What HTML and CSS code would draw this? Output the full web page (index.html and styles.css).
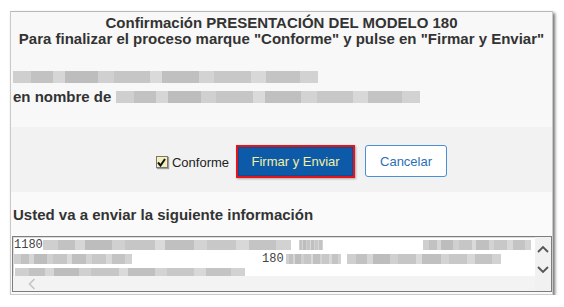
FILE: index.html
```html
<!DOCTYPE html>
<html lang="es">
<head>
<meta charset="utf-8">
<link rel="stylesheet" href="styles.css">
</head>
<body>
<div class="panel">
  <div class="title">Confirmación PRESENTACIÓN DEL MODELO 180<br>Para finalizar el proceso marque "Conforme" y pulse en "Firmar y Enviar"</div>
  <div class="who">
    <div class="blur b-who"></div>
    <div class="nombre">en nombre de <span class="blur b-nombre"></span></div>
  </div>
  <div class="actions">
    <label class="conforme"><span class="check"><svg width="9" height="9" viewBox="0 0 9 9"><path d="M1 4.5 L3.5 7.5 L8 1" fill="none" stroke="#111" stroke-width="2"/></svg></span>Conforme</label>
    <span class="firmar-wrap"><button class="firmar">Firmar y Enviar</button></span>
    <button class="cancelar">Cancelar</button>
  </div>
  <div class="info">
    <div class="info-title">Usted va a enviar la siguiente información</div>
    <div class="textarea">
      <div class="ta-body">
        <div class="ta-text">
          <div class="ta-row"><span class="mono">1180</span><span class="blur s1"></span><span class="blur s2"></span><span class="blur s3"></span></div>
          <div class="ta-row"><span class="blur s4"></span><span class="mono m2">180</span><span class="blur s5"></span><span class="blur s6"></span></div>
          <div class="ta-row"><span class="blur s7"></span></div>
        </div>
        <div class="hbar"><svg width="8" height="12" viewBox="0 0 8 12"><path d="M6.5 1 L1.5 6 L6.5 11" fill="none" stroke="#c4c4c4" stroke-width="1.6"/></svg></div>
      </div>
      <div class="vbar">
        <svg width="12" height="8" viewBox="0 0 12 8"><path d="M1 7 L6 2 L11 7" fill="none" stroke="#555" stroke-width="1.8"/></svg>
        <svg width="12" height="8" viewBox="0 0 12 8"><path d="M1 1 L6 6 L11 1" fill="none" stroke="#555" stroke-width="1.8"/></svg>
      </div>
    </div>
  </div>
</div>
</body>
</html>
```
FILE: styles.css
```css
* { box-sizing: border-box; }
body {
  margin: 0;
  background: #fff;
  font-family: "Liberation Sans", Arial, sans-serif;
  color: #333;
}
.panel {
  margin: 11px 0 0 10px;
  width: 543px;
  height: 284px;
  background: #f8f8f8;
  border: 1px solid #c9c9c9;
  border-top-color: #b8b8b8;
  box-shadow: 2px 2px 3px rgba(0,0,0,0.55);
  display: flex;
  flex-direction: column;
}
.title {
  flex: none;
  height: 35px;
  padding-top: 3px;
  text-align: center;
  font-weight: bold;
  font-size: 15px;
  line-height: 16px;
  color: #333;
}
.who {
  flex: none;
  padding: 24px 0 0 2px;
  height: 80px;
}
.blur {
  display: inline-block;
  background:
    linear-gradient(90deg,
      #cfcfcf 0 6%, #c2c2c2 6% 13%, #d6d6d6 13% 17%, #bdbdbd 17% 28%,
      #d0d0d0 28% 33%, #c6c6c6 33% 45%, #dadada 45% 49%, #c0c0c0 49% 61%,
      #d3d3d3 61% 66%, #c8c8c8 66% 78%, #d8d8d8 78% 83%, #c4c4c4 83% 94%, #d2d2d2 94% 100%);
}
.b-who {
  display: block;
  width: 305px;
  height: 12px;
}
.nombre {
  margin-top: 4px;
  font-weight: bold;
  font-size: 15px;
  line-height: 20px;
  color: #333;
  display: flex;
  align-items: center;
}
.b-nombre {
  margin-left: 5px;
  width: 304px;
  height: 12px;
}
.actions {
  flex: none;
  height: 65px;
  background: #f2f2f2;
  display: flex;
  align-items: flex-start;
  justify-content: center;
  padding: 18px 0 0 40px;
}
.conforme {
  display: flex;
  align-items: center;
  font-size: 13px;
  color: #222;
  height: 33px;
  padding-top: 1px;
}
.check {
  width: 12px;
  height: 12px;
  margin-right: 4px;
  background: #f4f0b8;
  border: 1px solid #777;
  box-shadow: 1px 1px 1px rgba(0,0,0,0.35);
  display: flex;
  align-items: center;
  justify-content: center;
}
.check svg { display: block; }
.firmar-wrap {
  margin-left: 7px;
  display: block;
  border: 2px solid #e5141b;
  box-shadow: 1px 1px 2px rgba(0,0,0,0.3);
}
.firmar {
  display: block;
  width: 115px;
  height: 29px;
  border: 1px solid #0b4d97;
  background: #0d5aa8;
  color: #f3f0a2;
  font-family: "Liberation Sans", Arial, sans-serif;
  font-size: 13px;
  padding: 0;
}
.cancelar {
  margin-left: 10px;
  width: 82px;
  height: 32px;
  background: #fff;
  border: 1px solid #4a8fd7;
  border-radius: 3px;
  color: #2c6fb8;
  font-family: "Liberation Sans", Arial, sans-serif;
  font-size: 13px;
  padding: 0;
}
.info {
  background: #fafafa;
  flex: 1;
  min-height: 0;
  padding: 13px 0 0 1px;
}
.info-title {
  font-weight: bold;
  font-size: 15px;
  line-height: 20px;
  color: #333;
  padding-left: 1px;
}
.textarea {
  margin-top: 11px;
  width: 540px;
  height: 56px;
  border: 1px solid #7d7d7d;
  box-shadow: inset 0 0 0 1px #dcdcdc;
  background: #fff;
  display: flex;
  overflow: hidden;
}
.ta-body {
  flex: 1;
  min-width: 0;
  display: flex;
  flex-direction: column;
}
.ta-text {
  flex: 1;
  min-height: 0;
  overflow: hidden;
  padding: 1px 0 0 1px;
}
.ta-row {
  height: 14px;
  display: flex;
  align-items: center;
  white-space: nowrap;
}
.mono {
  font-family: "Liberation Mono", "Courier New", monospace;
  font-size: 12px;
  color: #444;
}
.blur.s1 { width: 248px; height: 10px; }
.blur.s2 { width: 24px; height: 10px; margin-left: 8px; }
.blur.s3 { width: 108px; height: 10px; margin-left: 100px; }
.blur.s4 { width: 118px; height: 10px; }
.mono.m2 { margin-left: 130px; }
.blur.s5 { width: 55px; height: 10px; margin-left: 2px; }
.blur.s6 { width: 154px; height: 10px; margin-left: 6px; }
.blur.s7 { width: 230px; height: 10px; margin-left: 1px; }
.hbar {
  flex: none;
  height: 15px;
  background: #f3f3f3;
  display: flex;
  align-items: center;
  padding-left: 15px;
}
.vbar {
  flex: none;
  width: 16px;
  background: #f1f1f1;
  display: flex;
  flex-direction: column;
  align-items: center;
  padding-top: 8px;
  gap: 13px;
}
.vbar svg, .hbar svg { display: block; }
```
